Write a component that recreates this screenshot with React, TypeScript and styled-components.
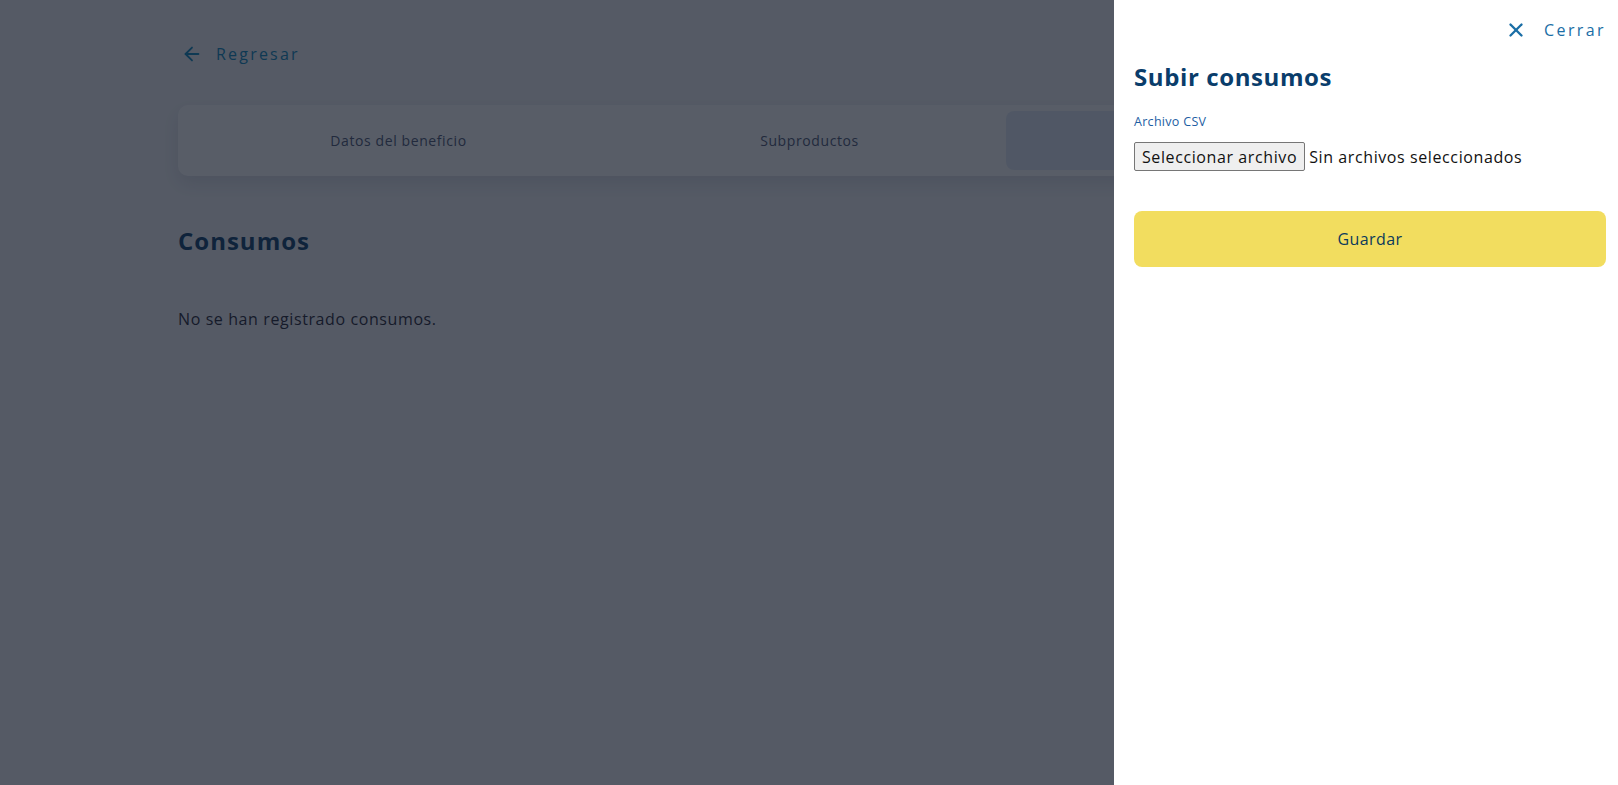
import React from 'react';
import styled, { createGlobalStyle } from 'styled-components';
import { FiArrowLeft, FiX } from 'react-icons/fi';

const GlobalStyle = createGlobalStyle`
  * {
    box-sizing: border-box;
  }

  body {
    margin: 0;
    font-family: 'Open Sans', 'DejaVu Sans', sans-serif;
    background-color: #f4f5f8;
  }
`;

const tabs = ['Datos del beneficio', 'Subproductos', 'Consumos'];

const App = () => {
  return (
    <>
      <GlobalStyle />
      <Page>
        <Container>
          <BackLink>
            <FiArrowLeft />
            <span>Regresar</span>
          </BackLink>
          <TabCard>
            {tabs.map((tab, i) => (
              <Tab key={tab} active={i === 2}>{tab}</Tab>
            ))}
          </TabCard>
          <SectionTitle>Consumos</SectionTitle>
          <EmptyText>No se han registrado consumos.</EmptyText>
        </Container>
      </Page>

      <Overlay />

      <Drawer>
        <DrawerHeader>
          <CloseButton type='button'>
            <FiX />
            <span>Cerrar</span>
          </CloseButton>
        </DrawerHeader>
        <DrawerTitle>Subir consumos</DrawerTitle>
        <FieldLabel>Archivo CSV</FieldLabel>
        <FileRow>
          <HiddenInput id='csv-file' type='file' accept='.csv' />
          <FileButton htmlFor='csv-file'>Seleccionar archivo</FileButton>
          <FileName>Sin archivos seleccionados</FileName>
        </FileRow>
        <SaveButton type='button'>Guardar</SaveButton>
      </Drawer>
    </>
  );
};

const Page = styled.div`
  min-height: 100vh;
  background-color: #f4f5f8;
`;

const Container = styled.main`
  max-width: 1262px;
  margin: 0 auto;
  padding-top: 42px;
`;

const BackLink = styled.a`
  display: flex;
  align-items: center;
  gap: 13px;
  height: 24px;
  padding-left: 3px;
  color: #0a86bd;
  font-size: 16px;
  font-weight: 500;
  letter-spacing: 2.2px;
  cursor: pointer;

  svg {
    font-size: 22px;
    stroke-width: 2px;
  }
`;

const TabCard = styled.nav`
  display: grid;
  grid-template-columns: 429px 393px 1fr;
  margin-top: 39px;
  padding: 6px;
  background-color: #ffffff;
  border-radius: 10px;
  box-shadow: 0 8px 18px rgba(40, 50, 80, 0.12);
`;

const Tab = styled.button<{ active: boolean }>`
  height: 59px;
  border: none;
  border-radius: 8px;
  background-color: ${({ active }) => active ? '#e4ecf7' : 'transparent'};
  color: #4a5573;
  font-family: inherit;
  font-size: 14px;
  font-weight: 500;
  letter-spacing: 0.6px;
  cursor: pointer;
`;

const SectionTitle = styled.h2`
  margin: 47px 0 0;
  color: #0a3d6b;
  font-size: 24px;
  line-height: 36px;
  font-weight: 700;
  letter-spacing: 1px;
`;

const EmptyText = styled.p`
  margin: 48px 0 0;
  color: #1f2433;
  font-size: 16px;
  line-height: 24px;
  letter-spacing: 0.6px;
`;

const Overlay = styled.div`
  position: fixed;
  inset: 0;
  background-color: rgba(17, 24, 39, 0.7);
`;

const Drawer = styled.aside`
  position: fixed;
  top: 0;
  right: 0;
  bottom: 0;
  width: 504px;
  display: flex;
  flex-direction: column;
  padding: 20px 12px 0 20px;
  background-color: #ffffff;
`;

const DrawerHeader = styled.div`
  display: flex;
  justify-content: flex-end;
  height: 20px;
`;

const CloseButton = styled.button`
  display: flex;
  align-items: center;
  gap: 17px;
  padding: 0;
  border: none;
  background: none;
  color: #1a6ea6;
  font-family: inherit;
  font-size: 16px;
  letter-spacing: 2.4px;
  cursor: pointer;

  svg {
    font-size: 22px;
    stroke-width: 2.6px;
  }
`;

const DrawerTitle = styled.h1`
  margin: 21px 0 0;
  color: #0a3d6b;
  font-size: 24px;
  line-height: 32px;
  font-weight: 700;
  letter-spacing: 0.6px;
`;

const FieldLabel = styled.span`
  margin-top: 20px;
  color: #1d5ea3;
  font-size: 12.5px;
  line-height: 18px;
  font-weight: 500;
  letter-spacing: 0.3px;
`;

const FileRow = styled.div`
  display: flex;
  align-items: center;
  gap: 4px;
  margin-top: 11px;
`;

const FileButton = styled.label`
  display: flex;
  align-items: center;
  height: 29px;
  padding: 0 7px;
  border: 1px solid #767676;
  border-radius: 2px;
  background-color: #efefef;
  color: #111111;
  font-size: 16px;
  letter-spacing: 0.6px;
  cursor: pointer;
`;

const HiddenInput = styled.input`
  display: none;
`;

const FileName = styled.span`
  color: #111111;
  font-size: 16px;
  letter-spacing: 0.6px;
`;

const SaveButton = styled.button`
  height: 56px;
  margin-top: 40px;
  border: none;
  border-radius: 8px;
  background-color: #f2dd5f;
  color: #0b3a5c;
  font-family: inherit;
  font-size: 16px;
  font-weight: 500;
  letter-spacing: 0.4px;
  cursor: pointer;
`;

export default App;
